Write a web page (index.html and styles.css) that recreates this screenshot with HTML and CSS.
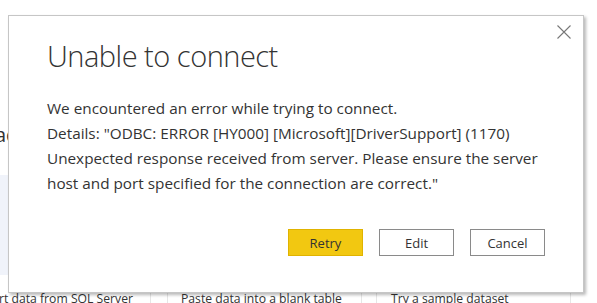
FILE: index.html
```html
<!DOCTYPE html>
<html lang="en">
<head>
    <meta charset="UTF-8">
    <meta name="viewport" content="width=device-width, initial-scale=1.0">
    <title>Unable to connect</title>
    <link rel="stylesheet" href="styles.css">
</head>
<body>
    <div class="page">
        <div class="page-heading"><span>ad</span></div>
        <div class="page-panel"></div>
        <div class="sources">
            <div class="source first">Import data from SQL Server</div>
            <div class="source">Paste data into a blank table</div>
            <div class="source">Try a sample dataset</div>
        </div>
    </div>

    <div class="dialog">
        <button class="close" aria-label="Close">
            <svg width="14" height="14" viewBox="0 0 14 14">
                <path d="M0.5 0.5 L13.5 13.5 M13.5 0.5 L0.5 13.5" stroke="#777" stroke-width="1.1" fill="none"/>
            </svg>
        </button>
        <h1>Unable to connect</h1>
        <p>We encountered an error while trying to connect.</p>
        <p>Details: "ODBC: ERROR [HY000] [Microsoft][DriverSupport] (1170) Unexpected response received from server. Please ensure the server host and port specified for the connection are correct."</p>
        <div class="actions">
            <button class="btn primary">Retry</button>
            <button class="btn">Edit</button>
            <button class="btn">Cancel</button>
        </div>
    </div>
</body>
</html>
```

FILE: styles.css
```css
* {
    box-sizing: border-box;
    margin: 0;
    padding: 0;
}

body {
    font-family: "Open Sans", "Noto Sans", sans-serif;
    color: #333;
    background-color: #fff;
    width: 597px;
    height: 303px;
    overflow: hidden;
    position: relative;
}

/* page behind the dialog */
.page {
    padding-top: 123px;
}
.page-heading {
    height: 52px;
    font-size: 20px;
    line-height: 24px;
    color: #333;
    margin-left: -5px;
}
.page-panel {
    height: 100px;
    width: 120px;
    background-color: #f0f3fa;
}
.sources {
    display: flex;
    margin-top: 15px;
    margin-left: -60px;
    font-size: 12.2px;
    color: #333;
}
.source {
    width: 195px;
    height: 20px;
    padding-left: 13px;
    border-left: 1px solid #e6e6e6;
    border-right: 1px solid #e6e6e6;
    white-space: nowrap;
}
.source.first {
    width: 211px;
    padding-left: 0;
    padding-right: 17px;
    text-align: right;
    border-left: none;
    margin-right: 16px;
}
.source + .source {
    margin-right: 14px;
}
.source:last-child {
    padding-left: 14px;
}

/* the modal */
.dialog {
    position: absolute;
    left: 8px;
    top: 15px;
    width: 576px;
    height: 278px;
    background-color: #fff;
    border: 1px solid #c6c6c6;
    box-shadow: 2px 2px 3px rgba(0, 0, 0, 0.28);
    padding: 23px 38px 0 38px;
}
.dialog h1 {
    font-size: 29px;
    font-weight: 300;
    color: #333;
    line-height: 34px;
    letter-spacing: -0.5px;
    margin-bottom: 23px;
}
.dialog p {
    font-size: 15.3px;
    line-height: 25px;
    color: #333;
}
.close {
    position: absolute;
    right: 12px;
    top: 9px;
    background: none;
    border: none;
    cursor: pointer;
    width: 14px;
    height: 14px;
}
.close svg {
    display: block;
}

.actions {
    display: flex;
    justify-content: flex-end;
    gap: 16px;
    margin-top: 33px;
}
.btn {
    width: 75px;
    height: 27px;
    font-family: "Open Sans", "Noto Sans", sans-serif;
    font-size: 13px;
    color: #333;
    background-color: #fff;
    border: 1px solid #8a8a8a;
    cursor: pointer;
}
.btn.primary {
    background-color: #f2c811;
    border-color: #e0b300;
}
```
